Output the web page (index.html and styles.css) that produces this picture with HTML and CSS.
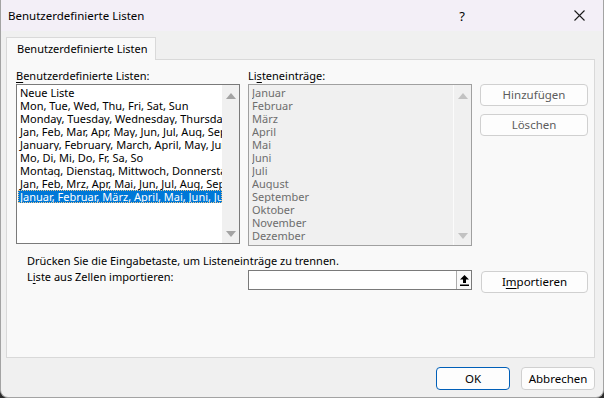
FILE: index.html
```html
<!DOCTYPE html>
<html>
<head>
    <title>Benutzerdefinierte Listen</title>
    <meta name="viewport" content="width=device-width, initial-scale=1.0">
    <link rel="stylesheet" href="styles.css">
</head>
<body>
    <div class="window">
        <div class="titlebar">
            <span class="title">Benutzerdefinierte Listen</span>
            <span class="help">?</span>
            <span class="close">
                <svg width="11" height="11" viewBox="0 0 11 11"><path d="M0.5 0.5 L10.5 10.5 M10.5 0.5 L0.5 10.5" stroke="#1a1a1a" stroke-width="1.1" fill="none"/></svg>
            </span>
        </div>

        <div class="client">
            <div class="tabs">
                <div class="tab">Benutzerdefinierte Listen</div>
            </div>

            <div class="panel">
                <div class="lists">
                    <div class="label"><u>B</u>enutzerdefinierte Listen:</div>
                    <div class="label">Li<u>s</u>teneinträge:</div>
                    <div></div>

                    <div class="listbox">
                        <div class="items">
                            <div class="item">Neue Liste</div>
                            <div class="item">Mon, Tue, Wed, Thu, Fri, Sat, Sun</div>
                            <div class="item">Monday, Tuesday, Wednesday, Thursday, Friday, Saturday, Sunday</div>
                            <div class="item">Jan, Feb, Mar, Apr, May, Jun, Jul, Aug, Sep, Oct, Nov, Dec</div>
                            <div class="item">January, February, March, April, May, June, July, August</div>
                            <div class="item">Mo, Di, Mi, Do, Fr, Sa, So</div>
                            <div class="item">Montag, Dienstag, Mittwoch, Donnerstag, Freitag</div>
                            <div class="item">Jan, Feb, Mrz, Apr, Mai, Jun, Jul, Aug, Sep, Okt, Nov, Dez</div>
                            <div class="item selected">Januar, Februar, März, April, Mai, Juni, Juli, August</div>
                        </div>
                        <div class="scrollbar">
                            <span class="arrow up"></span>
                            <span class="arrow down"></span>
                        </div>
                    </div>

                    <div class="listbox disabled">
                        <div class="items">
                            <div class="item">Januar</div>
                            <div class="item">Februar</div>
                            <div class="item">März</div>
                            <div class="item">April</div>
                            <div class="item">Mai</div>
                            <div class="item">Juni</div>
                            <div class="item">Juli</div>
                            <div class="item">August</div>
                            <div class="item">September</div>
                            <div class="item">Oktober</div>
                            <div class="item">November</div>
                            <div class="item">Dezember</div>
                        </div>
                        <div class="scrollbar">
                            <span class="arrow up"></span>
                            <span class="arrow down"></span>
                        </div>
                    </div>

                    <div class="side-buttons">
                        <button class="btn muted">Hinzufügen</button>
                        <button class="btn muted">Löschen</button>
                    </div>
                </div>

                <p class="hint">Drücken Sie die Eingabetaste, um Listeneinträge zu trennen.</p>

                <div class="import-row">
                    <div class="import-label">L<u>i</u>ste aus Zellen importieren:</div>
                    <div class="range-input">
                        <span class="collapse">
                            <svg width="9" height="11" viewBox="0 0 9 11"><path d="M4.5 0 L9 4.5 L6 4.5 L6 8 L3 8 L3 4.5 L0 4.5 Z" fill="#000"/><rect x="0" y="9.5" width="9" height="1.5" fill="#000"/></svg>
                        </span>
                    </div>
                    <button class="btn">I<u>m</u>portieren</button>
                </div>
            </div>

            <div class="footer">
                <button class="btn default">OK</button>
                <button class="btn">Abbrechen</button>
            </div>
        </div>
    </div>
</body>
</html>
```

FILE: styles.css
```css
html, body {
    margin: 0;
    padding: 0;
    background-color: #2b2b2b;
}

body {
    font-family: "Noto Sans", "Open Sans", sans-serif;
    font-size: 11px;
    color: #000;
}

.window {
    width: 604px;
    height: 398px;
    box-sizing: border-box;
    border: 1px solid #a3a3a3;
    border-top: none;
    border-radius: 0 0 8px 8px;
    overflow: hidden;
    display: flex;
    flex-direction: column;
    background-color: #f0f0f0;
}

/* Title bar */
.titlebar {
    height: 31px;
    flex-shrink: 0;
    display: flex;
    align-items: center;
    padding-left: 7px;
    background-color: #f3eff7;
    font-size: 11.5px;
}

.title {
    flex: 1;
}

.help {
    width: 20px;
    text-align: center;
    margin-right: 102px;
    font-size: 13px;
}

.close {
    display: flex;
    align-items: center;
    justify-content: center;
    width: 11px;
    margin-right: 18px;
}

/* Client area */
.client {
    flex: 1;
    display: flex;
    flex-direction: column;
    padding: 6px 8px 7px 5px;
}

.tabs {
    display: flex;
    height: 22px;
}

.tab {
    box-sizing: border-box;
    width: 150px;
    height: 23px;
    padding: 4px 0 0 10px;
    background-color: #f9f9f9;
    border: 1px solid #d9d9d9;
    border-bottom: none;
    position: relative;
    z-index: 1;
    white-space: nowrap;
    line-height: 14px;
}

.panel {
    flex: 1;
    background-color: #f9f9f9;
    border: 1px solid #d9d9d9;
    padding: 9px 0 0 9px;
}

.lists {
    display: grid;
    grid-template-columns: 224px 224px 108px;
    column-gap: 8px;
    row-gap: 2px;
    align-items: start;
}

.label {
    line-height: 13px;
    height: 13px;
}

u {
    text-decoration-thickness: 1px;
    text-underline-offset: 2px;
}

/* List boxes */
.listbox {
    display: flex;
    height: 160px;
    box-sizing: border-box;
    border: 1px solid #7a7a7a;
    background-color: #fff;
    overflow: hidden;
}

.items {
    flex: 1;
    min-width: 0;
    padding: 1px 0 0 1px;
    overflow: hidden;
}

.item {
    height: 13px;
    line-height: 13px;
    padding-left: 2px;
    white-space: nowrap;
    overflow: hidden;
}

.item.selected {
    background-color: #0078d7;
    color: #fff;
    box-sizing: border-box;
    border: 1px dotted #e9c48a;
    padding-left: 1px;
    line-height: 11px;
}

.scrollbar {
    width: 17px;
    flex-shrink: 0;
    background-color: #f0f0f0;
    display: flex;
    flex-direction: column;
    justify-content: space-between;
    align-items: center;
    padding: 8px 0 6px;
}

.arrow {
    width: 0;
    height: 0;
    border-left: 5px solid transparent;
    border-right: 5px solid transparent;
}

.arrow.up {
    border-bottom: 6px solid #a3a3a3;
}

.arrow.down {
    border-top: 6px solid #a3a3a3;
}

.listbox.disabled {
    height: 162px;
    border-color: #a0a0a0;
    background-color: #f0f0f0;
    color: #6d6d6d;
}

.listbox.disabled .items {
    padding: 1px 0 0 3px;
}

.listbox.disabled .item {
    padding-left: 0;
}

.listbox.disabled .scrollbar {
    border-left: 1px solid #fbfbfb;
}

.listbox.disabled .arrow.up {
    border-bottom-color: #c2c2c2;
}

.listbox.disabled .arrow.down {
    border-top-color: #c2c2c2;
}

/* Buttons */
.btn {
    font-family: inherit;
    font-size: 11.5px;
    color: #000;
    background-color: #fdfdfd;
    border: 1px solid #d0d0d0;
    border-radius: 4px;
    padding: 0;
    height: 22px;
    line-height: 18px;
}

.btn.muted {
    color: #5c5c5c;
}

.side-buttons {
    display: flex;
    flex-direction: column;
    gap: 8px;
}

.side-buttons .btn {
    width: 108px;
}

.hint {
    margin: 8px 0 0 11px;
    line-height: 13px;
}

.import-row {
    display: grid;
    grid-template-columns: 224px 224px 108px;
    column-gap: 8px;
    margin-top: 3px;
    align-items: start;
}

.import-label {
    padding: 0 0 0 11px;
    line-height: 13px;
}

.range-input {
    height: 20px;
    box-sizing: border-box;
    border: 1px solid #7a7a7a;
    background-color: #fff;
    display: flex;
    justify-content: flex-end;
}

.collapse {
    width: 15px;
    box-sizing: border-box;
    border-left: 1px solid #adadad;
    background-color: #fafafa;
    display: flex;
    align-items: center;
    justify-content: center;
}

.import-row .btn {
    margin: 1px 0 0 1px;
    width: 107px;
}

/* Footer buttons */
.footer {
    display: flex;
    justify-content: flex-end;
    gap: 11px;
    margin-top: 9px;
}

.footer .btn {
    width: 74px;
    height: 23px;
}

.footer .btn.default {
    border-color: #005fb8;
}
```
